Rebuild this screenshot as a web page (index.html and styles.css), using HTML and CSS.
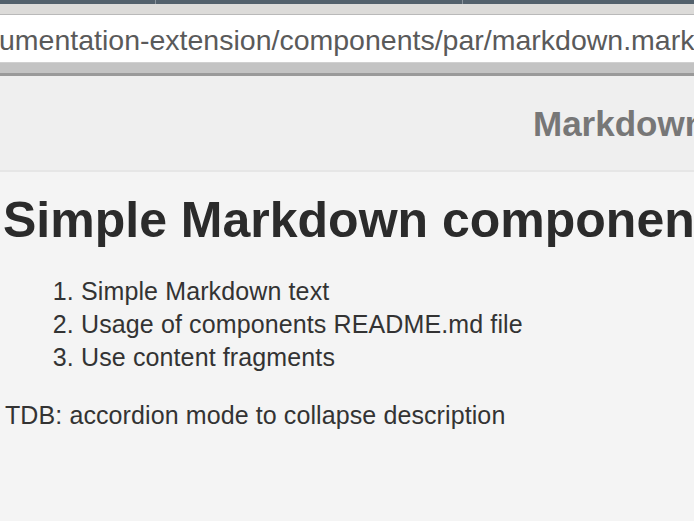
FILE: index.html
```html
<!DOCTYPE html>
<html>
<head>
<meta charset="utf-8">
<link rel="stylesheet" href="styles.css">
</head>
<body>
<div class="chrome">
  <div class="tabstrip">
    <div class="tab tab-a"></div>
    <div class="tab tab-b"></div>
    <div class="tab tab-c"></div>
  </div>
  <div class="toolbar"></div>
  <div class="urlbar"><span class="url">umentation-extension/components/par/markdown.mark</span></div>
  <div class="bookmarks"></div>
</div>
<div class="header">
  <div class="brand">Markdown</div>
</div>
<main class="content">
  <h1 class="title">Simple Markdown components</h1>
  <ol class="items">
    <li>Simple Markdown text</li>
    <li>Usage of components README.md file</li>
    <li>Use content fragments</li>
  </ol>
  <p class="note">TDB: accordion mode to collapse description</p>
</main>
</body>
</html>
```

FILE: styles.css
```css
html, body {
  margin: 0;
  padding: 0;
}
body {
  width: 694px;
  height: 521px;
  overflow: hidden;
  background: #f4f4f4;
  font-family: "Liberation Sans", Arial, sans-serif;
  color: #333;
}
.chrome {
  display: flex;
  flex-direction: column;
}
.tabstrip {
  height: 4px;
  background: #53616c;
  display: flex;
}
.tab {
  height: 4px;
  border-right: 1px solid #8a949c;
}
.tab-a { width: 155px; }
.tab-b { width: 306px; }
.tab-c { flex: 1; border-right: none; }
.toolbar {
  height: 10px;
  background: #dcdbd9;
  border-bottom: 1px solid #b9b9b9;
}
.urlbar {
  height: 47px;
  background: #ffffff;
  overflow: hidden;
  white-space: nowrap;
  display: flex;
  align-items: center;
}
.url {
  font-size: 28.5px;
  color: #5a5a5a;
  margin-left: -1px;
  margin-top: 3px;
}
.bookmarks {
  height: 10px;
  background: #c3c3c3;
  border-top: 1px solid #d0d0d0;
  border-bottom: 3px solid #9a9a9a;
}
.header {
  height: 94px;
  background: #efefef;
  border-bottom: 2px solid #e6e6e6;
  display: flex;
  align-items: center;
  padding-left: 533px;
  overflow: hidden;
  white-space: nowrap;
}
.brand {
  font-size: 35px;
  font-weight: bold;
  color: #777;
  margin-top: 2px;
}
.content {
  padding: 21px 0 0 5px;
  white-space: nowrap;
}
.title {
  margin: 0;
  font-size: 50px;
  line-height: 55px;
  font-weight: bold;
  color: #2b2b2b;
  margin-left: -2px;
}
.items {
  margin: 27px 0 0 0;
  padding-left: 76px;
  font-size: 25px;
  line-height: 33px;
  letter-spacing: 0.12px;
}
.note {
  margin: 25px 0 0 0;
  font-size: 25px;
  line-height: 33px;
  letter-spacing: 0.1px;
}
```
